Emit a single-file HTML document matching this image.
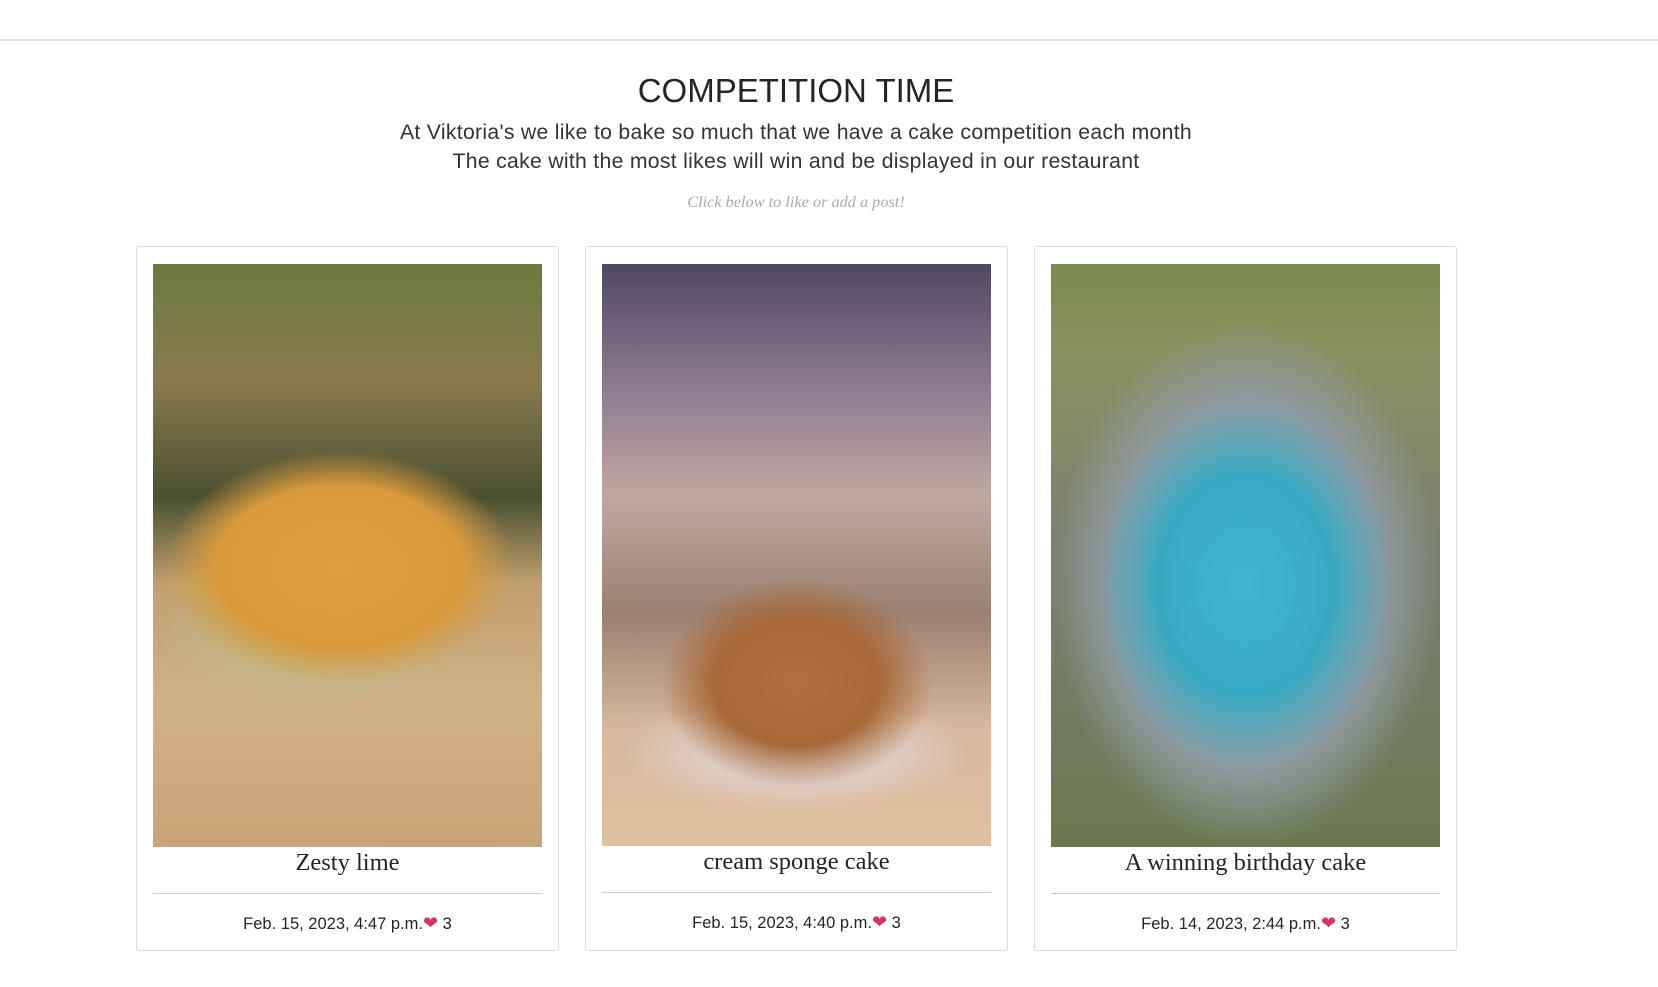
<!DOCTYPE html>
<html><head><meta charset="utf-8"><style>
body{margin:0;background:#fff;width:1658px;height:987px;overflow:hidden;font-family:"Liberation Sans",sans-serif;color:#212529}
.top{height:39px;border-bottom:2px solid #ddd}
h1{position:absolute;top:71px;left:0;width:1592px;text-align:center;font-size:33px;font-weight:400;margin:0;line-height:40px}
.p{position:absolute;left:0;width:1592px;text-align:center;font-size:21.2px;font-weight:300;letter-spacing:.3px;line-height:26px;color:#333}
.i{position:absolute;top:192px;left:0;width:1592px;text-align:center;font-family:"Liberation Serif",serif;font-style:italic;color:#aaa;font-size:16.3px}
.card{position:absolute;top:246px;width:421px;height:703px;border:1px solid #ddd;border-radius:3px}
.img{position:absolute;left:16px;top:17px;width:389px;height:583px}
.t{position:absolute;top:600px;left:0;width:421px;text-align:center;font-family:"Liberation Serif",serif;font-size:24.5px;line-height:32px}
.hr{position:absolute;left:16px;width:389px;top:646px;border-top:1px solid #ccc}
.d{position:absolute;top:666px;left:0;width:421px;text-align:center;font-size:16.5px;line-height:20px}
.h{color:#d6336c;font-size:18px}
</style></head><body>
<div class="top"></div>
<h1>COMPETITION TIME</h1>
<div class="p" style="top:120px">At Viktoria's we like to bake so much that we have a cake competition each month</div>
<div class="p" style="top:149px">The cake with the most likes will win and be displayed in our restaurant</div>
<div class="i">Click below to like or add a post!</div>

<div class="card" style="left:136px">
<div class="img" style="background:radial-gradient(ellipse 45% 20% at 48% 52%,#e0a040 0,#d89a3c 70%,transparent 100%),radial-gradient(ellipse 40% 15% at 40% 62%,#b8c090 0,transparent 100%),linear-gradient(180deg,#6a7a40 0,#8a7a50 20%,#4a5030 40%,#c0a070 55%,#d0b088 75%,#c8a478 100%)"></div>
<div class="t">Zesty lime</div><div class="hr"></div>
<div class="d">Feb. 15, 2023, 4:47 p.m.<span class="h">❤</span> 3</div></div>

<div class="card" style="left:585px">
<div class="img" style="height:582px;background:radial-gradient(ellipse 35% 18% at 50% 72%,#b07040 0,#a86838 60%,transparent 100%),radial-gradient(ellipse 45% 10% at 50% 84%,#e0e0e8 0,transparent 100%),linear-gradient(180deg,#504860 0,#8a7890 20%,#c0a8a0 40%,#9a8070 60%,#d8b8a0 80%,#e0c0a0 100%)"></div>
<div class="t" style="top:599px">cream sponge cake</div><div class="hr" style="top:645px"></div>
<div class="d" style="top:665px">Feb. 15, 2023, 4:40 p.m.<span class="h">❤</span> 3</div></div>

<div class="card" style="left:1034px">
<div class="img" style="background:radial-gradient(ellipse 38% 32% at 50% 55%,#40b8d0 0,#38a8c0 60%,transparent 100%),radial-gradient(ellipse 50% 45% at 50% 55%,#b8c0c8 0,#909aa0 70%,transparent 100%),linear-gradient(180deg,#7a8a50 0,#8a9060 15%,#7a8070 50%,#6a7850 100%)"></div>
<div class="t">A winning birthday cake</div><div class="hr"></div>
<div class="d">Feb. 14, 2023, 2:44 p.m.<span class="h">❤</span> 3</div></div>
</body></html>
